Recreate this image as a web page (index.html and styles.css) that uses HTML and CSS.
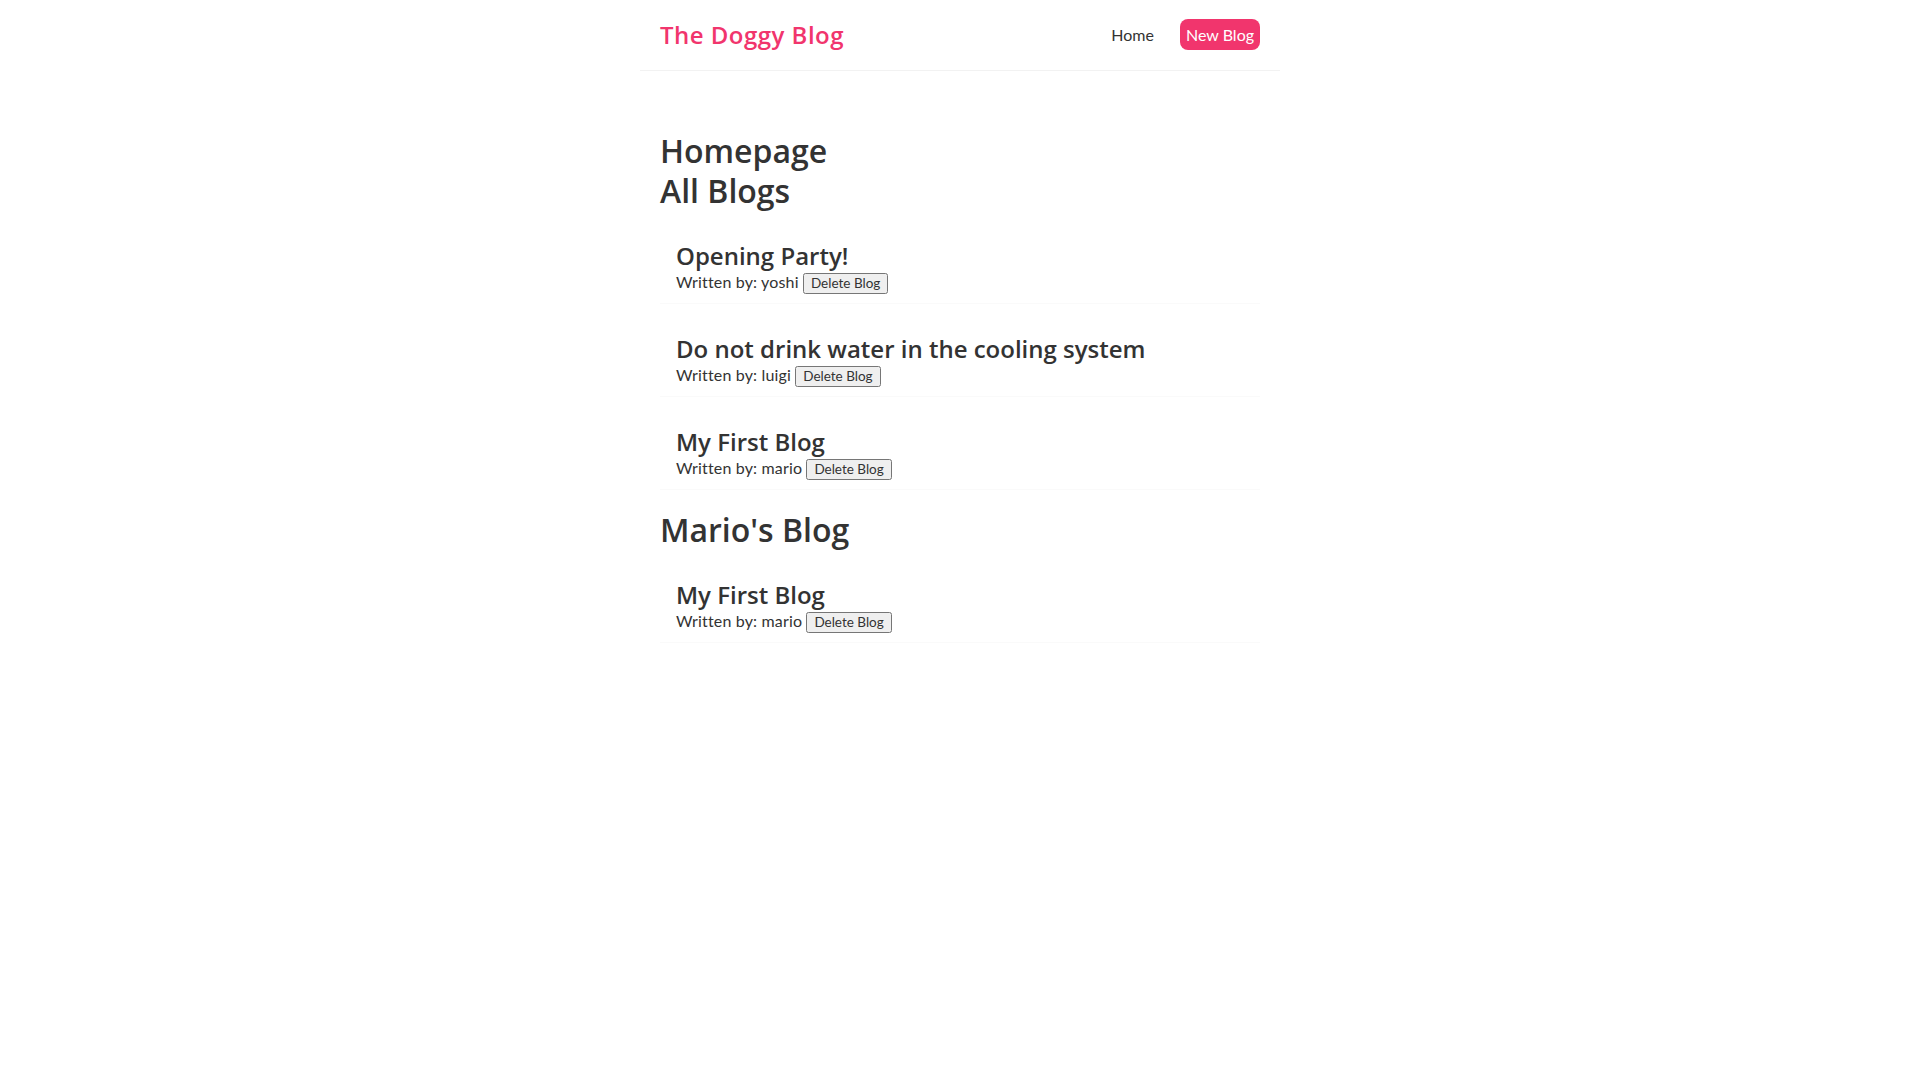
FILE: index.html
```html
<!DOCTYPE html>
<html lang="en">
<head>
<meta charset="utf-8">
<title>The Doggy Blog</title>
<link rel="stylesheet" href="styles.css">
</head>
<body>
<div class="app">
  <nav class="navbar">
    <h1>The Doggy Blog</h1>
    <div class="links">
      <a href="#">Home</a>
      <a href="#" class="new-blog">New Blog</a>
    </div>
  </nav>
  <div class="content">
    <div class="home">
      <h2>Homepage</h2>
      <div class="blog-list">
        <h2>All Blogs</h2>
        <div class="blog-preview">
          <h2>Opening Party!</h2>
          <p>Written by: yoshi <button>Delete Blog</button></p>
        </div>
        <div class="blog-preview">
          <h2>Do not drink water in the cooling system</h2>
          <p>Written by: luigi <button>Delete Blog</button></p>
        </div>
        <div class="blog-preview">
          <h2>My First Blog</h2>
          <p>Written by: mario <button>Delete Blog</button></p>
        </div>
      </div>
      <div class="blog-list">
        <h2>Mario's Blog</h2>
        <div class="blog-preview">
          <h2>My First Blog</h2>
          <p>Written by: mario <button>Delete Blog</button></p>
        </div>
      </div>
    </div>
  </div>
</div>
</body>
</html>
```
FILE: styles.css
```css
* {
  margin: 0;
  font-family: "Lato", "Noto Sans", sans-serif;
  color: #333;
  line-height: 1.25;
}
body {
  background: #fff;
}
.navbar {
  padding: 20px;
  display: flex;
  align-items: center;
  max-width: 600px;
  margin: 0 auto;
  border-bottom: 1px solid #f2f2f2;
}
.navbar h1 {
  color: #f1356d;
  font-family: "Open Sans", sans-serif;
  font-size: 24px;
  font-weight: 600;
  letter-spacing: 0.02em;
}
.navbar .links {
  margin-left: auto;
}
.navbar a {
  margin-left: 16px;
  text-decoration: none;
  padding: 6px;
  font-size: 16px;
}
.navbar a.new-blog {
  color: #fff;
  background-color: #f1356d;
  border-radius: 8px;
}
.content {
  max-width: 600px;
  margin: 40px auto;
  padding: 20px;
}
.home > h2,
.blog-list > h2 {
  font-family: "Open Sans", sans-serif;
  font-size: 32px;
  font-weight: 600;
}
.blog-preview {
  padding: 10px 16px;
  margin: 20px 0;
  border-bottom: 1px solid #fafafa;
}
.blog-preview h2 {
  font-family: "Open Sans", sans-serif;
  font-size: 24px;
  font-weight: 600;
}
.blog-preview p {
  font-size: 16px;
  line-height: 22px;
  height: 22px;
  letter-spacing: 0.01em;
}
.blog-preview button {
  font-size: 13.5px;
  line-height: 15px;
  padding: 1px 6px;
  letter-spacing: 0;
  vertical-align: middle;
}
```
